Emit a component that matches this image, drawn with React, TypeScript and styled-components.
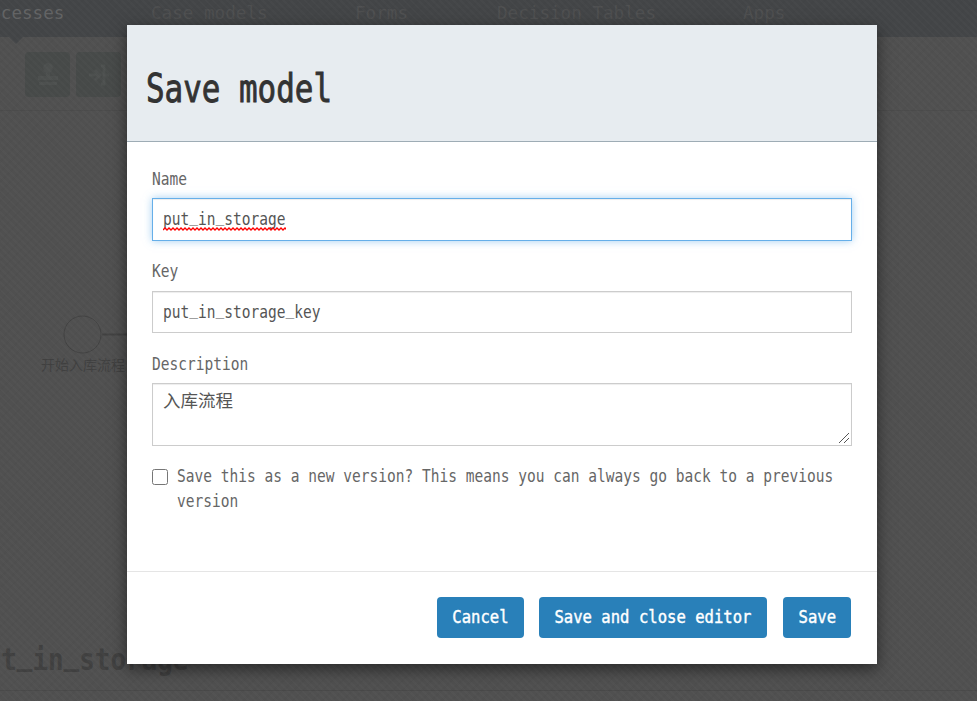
import React from "react";
import styled, { createGlobalStyle, css } from "styled-components";

const GlobalStyle = createGlobalStyle`
  * { box-sizing: border-box; }
  html, body { margin: 0; height: 100%; overflow: hidden; background: #4f4f4f; }
  body { font-family: "DejaVu Sans Mono", "Noto Sans CJK SC", monospace; color: #666; }
`;

/* Condenses the monospace face to a given advance width. */
const condensed = css<{ $size: number; $pitch: number; $origin?: string }>`
  font-family: "DejaVu Sans Mono", monospace;
  font-size: ${(p) => p.$size}px;
  transform: scaleX(${(p) => p.$pitch / (p.$size * 0.602)});
  transform-origin: ${(p) => p.$origin ?? "left"} center;
`;

const Text = styled.span<{ $size: number; $pitch: number; $origin?: string; $stroke?: number }>`
  ${condensed}
  display: inline-block;
  white-space: nowrap;
  -webkit-text-stroke: ${(p) => p.$stroke ?? 0}px currentColor;
`;

const Raised = styled.span`
  vertical-align: 0.17em;
  line-height: 0;
`;

const Page = styled.div`
  position: relative;
  width: 977px;
  height: 701px;
  overflow: hidden;
  display: flex;
  flex-direction: column;
  background: #505050;
`;

const Weave = styled.div`
  position: absolute;
  inset: 0;
  background:
    repeating-linear-gradient(45deg, rgba(255, 255, 255, 0.016) 0 2px, transparent 2px 5px),
    repeating-linear-gradient(-45deg, rgba(0, 0, 0, 0.02) 0 2px, transparent 2px 7px);
`;

const NavBar = styled.nav`
  height: 37px;
  flex: none;
  background: #434547;
  display: grid;
  grid-template-columns: 182px 204px 142px 246px 200px;
  margin-left: -31px;
  width: 1008px;
  line-height: 26px;
  color: #4e4f50;
`;

const NavItem = styled.div<{ $active?: boolean }>`
  min-width: 0;
  color: ${(p) => (p.$active ? "#626364" : "inherit")};
`;

const Toolbar = styled.div`
  height: 74px;
  flex: none;
  display: flex;
  gap: 6px;
  padding: 15px 0 0 25px;
  border-bottom: 1px solid #4b4b4b;
  position: relative;
`;

const Pointer = styled.i`
  position: absolute;
  left: 9px;
  top: 0;
  border: 7px solid transparent;
  border-top-color: #434547;
  border-bottom: 0;
`;

const Tool = styled.div`
  width: 45px;
  height: 45px;
  border-radius: 4px;
  background: #474a49;
  display: grid;
  place-items: center;
  color: #4d504f;
`;

const Canvas = styled.div`
  flex: 1;
  position: relative;
`;

const StartNode = styled.svg`
  position: absolute;
  left: 60px;
  top: 200px;
`;

const NodeLabel = styled.div`
  position: absolute;
  left: 41px;
  top: 243px;
  font: 14px/20px "Noto Sans CJK SC", sans-serif;
  color: #404040;
  white-space: nowrap;
`;

const ModelFooter = styled.footer`
  height: 71px;
  flex: none;
  display: flex;
  flex-direction: column;
  margin-left: -30px;
  color: #404040;
  font-weight: bold;
  line-height: 60px;
`;

const FooterRule = styled.div`
  border-top: 1px solid #494949;
`;

const Overlay = styled.div`
  position: absolute;
  inset: 0;
  display: flex;
  align-items: flex-start;
  padding: 25px 0 0 127px;
`;

const Dialog = styled.form`
  width: 750px;
  height: 639px;
  background: #fff;
  box-shadow: 0 5px 15px rgba(0, 0, 0, 0.5);
  display: flex;
  flex-direction: column;
`;

const Header = styled.header`
  height: 117px;
  background: #e7ecf0;
  border-bottom: 1px solid #9eacb5;
  padding: 35px 19px 0;
`;

const Title = styled.h2`
  margin: 0;
  line-height: 58px;
  font-weight: normal;
  color: #333;
`;

const Body = styled.div`
  height: 429px;
  padding: 24px 25px 0;
`;

const Label = styled.label<{ $gap: number }>`
  display: block;
  height: 25px;
  line-height: 25px;
  margin-bottom: ${(p) => p.$gap}px;
`;

const Field = styled.div<{ $focused?: boolean }>`
  position: relative;
  height: ${(p) => (p.$focused ? 43 : 42)}px;
  margin-bottom: ${(p) => (p.$focused ? 17 : 18)}px;
  padding: 0 10px;
  line-height: 39px;
  color: #555;
  border: 1px solid ${(p) => (p.$focused ? "#66afe9" : "#ccc")};
  box-shadow: inset 0 1px 1px rgba(0, 0, 0, 0.075)
    ${(p) => (p.$focused ? ", 0 0 8px rgba(102, 175, 233, 0.6)" : "")};
`;

const Squiggle = styled.svg`
  position: absolute;
  left: 10px;
  top: 28px;
`;

const DescriptionBox = styled.div`
  position: relative;
  height: 63px;
  margin-bottom: 17px;
`;

const Description = styled.textarea`
  display: block;
  width: 700px;
  height: 63px;
  padding: 3px 10px;
  margin: 0;
  border: 1px solid #ccc;
  outline: 0;
  resize: none;
  font: 17.5px/25px "Noto Sans CJK SC", sans-serif;
  color: #555;
  box-shadow: inset 0 1px 1px rgba(0, 0, 0, 0.075);
`;

const Grip = styled.svg`
  position: absolute;
  right: 3px;
  bottom: 3px;
`;

const VersionRow = styled.label`
  display: flex;
  gap: 9px;
  line-height: 25px;
`;

const Check = styled.input`
  width: 16px;
  height: 16px;
  margin: 6px 0 0;
  flex: none;
`;

const Footer = styled.footer`
  flex: 1;
  border-top: 1px solid #e5e5e5;
  padding: 25px 26px 0 0;
  display: flex;
  justify-content: flex-end;
  align-items: flex-start;
`;

const Button = styled.button<{ $width: number; $gap: number }>`
  width: ${(p) => p.$width}px;
  height: 41px;
  margin: 0 0 0 ${(p) => p.$gap}px;
  padding: 0 0 2px;
  border: 0;
  border-radius: 4px;
  background: #2980b9;
  color: #fff;
  display: flex;
  justify-content: center;
  align-items: center;
`;

const navItems = ["Processes", "Case models", "Forms", "Decision Tables", "Apps"];
const buttons = [
  { label: "Cancel", width: 87, gap: 0 },
  { label: "Save and close editor", width: 228, gap: 15 },
  { label: "Save", width: 68, gap: 16 },
];

const wave = "M0 3" + Array.from({ length: 31 }, (_, i) => ` L${i * 4 + 2} 1 L${i * 4 + 4} 3`).join("");

/* Identifiers are set with their underscores lifted to the baseline. */
function Identifier({ value }: { value: string }) {
  return (
    <>
      {value.split("_").map((part, i) => (
        <React.Fragment key={i}>
          {i > 0 && <Raised>_</Raised>}
          {part}
        </React.Fragment>
      ))}
    </>
  );
}

export default function App() {
  return (
    <Page>
      <GlobalStyle />
      <NavBar>
        {navItems.map((item, i) => (
          <NavItem key={item} $active={i === 0}>
            <Text $size={18.5} $pitch={10.6}>{item}</Text>
          </NavItem>
        ))}
      </NavBar>
      <Toolbar>
        <Pointer />
        <Tool>
          <svg width="24" height="24" viewBox="0 0 24 24" fill="currentColor">
            <circle cx="12" cy="5" r="5" />
            <path d="M10 8h4v5h8v4H2v-4h8zM3 19h18v3H3z" />
          </svg>
        </Tool>
        <Tool>
          <svg width="24" height="24" viewBox="0 0 24 24" fill="none" stroke="currentColor" strokeWidth="3">
            <path d="M2 12h11M8 7l5 5-5 5M14 3h3v18h-3M17 12h5" />
          </svg>
        </Tool>
      </Toolbar>
      <Canvas>
        <StartNode width="75" height="46" fill="none" stroke="#424242">
          <circle cx="22.5" cy="23.5" r="18.5" />
          <path d="M42 23.5H75" strokeWidth="2" />
        </StartNode>
        <NodeLabel>开始入库流程</NodeLabel>
      </Canvas>
      <ModelFooter>
        <Text $size={30} $pitch={15.6}><Identifier value="put_in_storage" /></Text>
        <FooterRule />
      </ModelFooter>
      <Weave />
      <Overlay>
        <Dialog onSubmit={(e) => e.preventDefault()}>
          <Header>
            <Title>
              <Text $size={38.5} $pitch={18.6} $stroke={0.9}>Save model</Text>
            </Title>
          </Header>
          <Body>
            <Label $gap={7}><Text $size={18} $pitch={8.75}>Name</Text></Label>
            <Field $focused role="textbox">
              <Text $size={18} $pitch={8.75}><Identifier value="put_in_storage" /></Text>
              <Squiggle width="123" height="4" fill="none" stroke="#f00" strokeWidth="1.3">
                <path d={wave} />
              </Squiggle>
            </Field>
            <Label $gap={8}><Text $size={18} $pitch={8.75}>Key</Text></Label>
            <Field role="textbox">
              <Text $size={18} $pitch={8.75}><Identifier value="put_in_storage_key" /></Text>
            </Field>
            <Label $gap={7}><Text $size={18} $pitch={8.75}>Description</Text></Label>
            <DescriptionBox>
              <Description defaultValue="入库流程" spellCheck={false} />
              <Grip width="10" height="10" fill="none" stroke="#555">
                <path d="M0 10L10 0M5 10L10 5" />
              </Grip>
            </DescriptionBox>
            <VersionRow>
              <Check type="checkbox" />
              <Text $size={18} $pitch={8.75}>
                Save this as a new version? This means you can always go back to a previous
                <br />
                version
              </Text>
            </VersionRow>
          </Body>
          <Footer>
            {buttons.map((b) => (
              <Button key={b.label} type="button" $width={b.width} $gap={b.gap}>
                <Text $size={18.5} $pitch={9.38} $origin="center" $stroke={0.45}>{b.label}</Text>
              </Button>
            ))}
          </Footer>
        </Dialog>
      </Overlay>
    </Page>
  );
}
